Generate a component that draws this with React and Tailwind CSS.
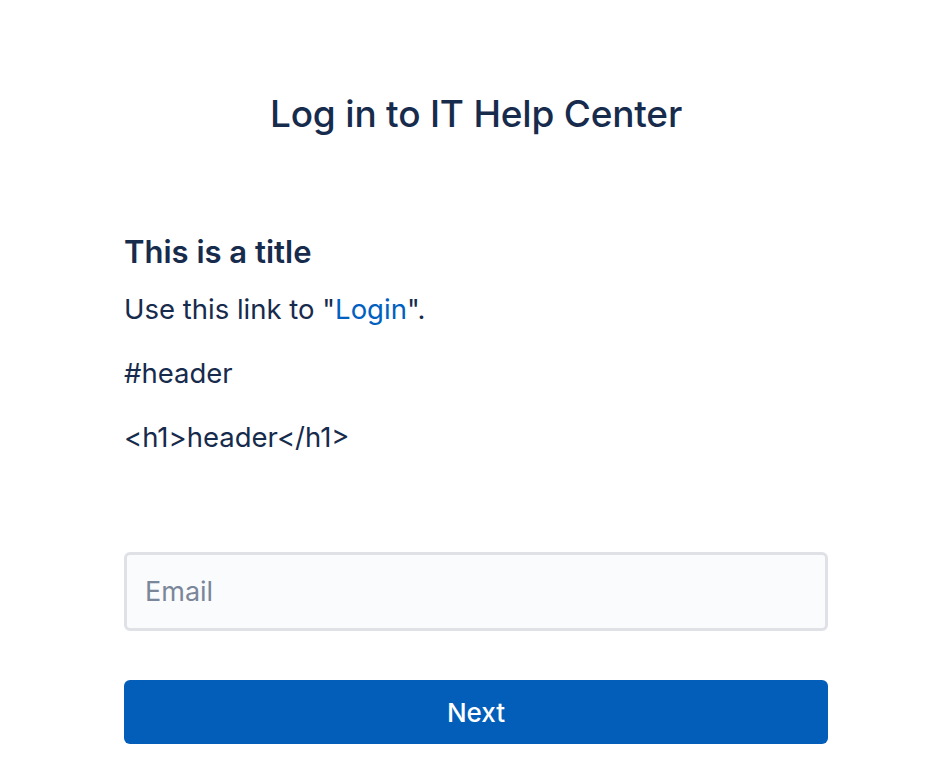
export default function App() {
  return (
    <div className="min-h-screen bg-white font-['Inter','Noto_Sans',sans-serif] text-[#172B4D]">
      <div className="mx-auto w-[704px] pt-[92px]">
        <h1 className="text-center text-[37px] leading-[44px] font-medium tracking-[-0.2px]">
          Log in to IT Help Center
        </h1>

        <div className="mt-[100px]">
          <h2 className="text-[31px] leading-[32px] font-semibold">This is a title</h2>
          <p className="mt-[21px] text-[27.5px] leading-[40px]">
            Use this link to "<a href="#" className="text-[#0060BF]">Login</a>".
          </p>
          <p className="mt-[24px] text-[27.5px] leading-[40px]">#header</p>
          <p className="mt-[24px] text-[27.5px] leading-[40px]">&lt;h1&gt;header&lt;/h1&gt;</p>
        </div>

        <form className="mt-[95px] flex flex-col" onSubmit={e => e.preventDefault()}>
          <input
            type="email"
            placeholder="Email"
            className="h-[79px] w-full rounded-[6px] border-[3px] border-[#DFE1E6] bg-[#FAFBFC] px-[18px] text-[27px] text-[#172B4D] placeholder:text-[#7A869A] outline-none"
          />
          <button
            type="submit"
            className="mt-[49px] h-[64px] w-full rounded-[6px] bg-[#025EB9] text-[26px] font-medium text-white"
          >
            Next
          </button>
        </form>
      </div>
    </div>
  )
}
